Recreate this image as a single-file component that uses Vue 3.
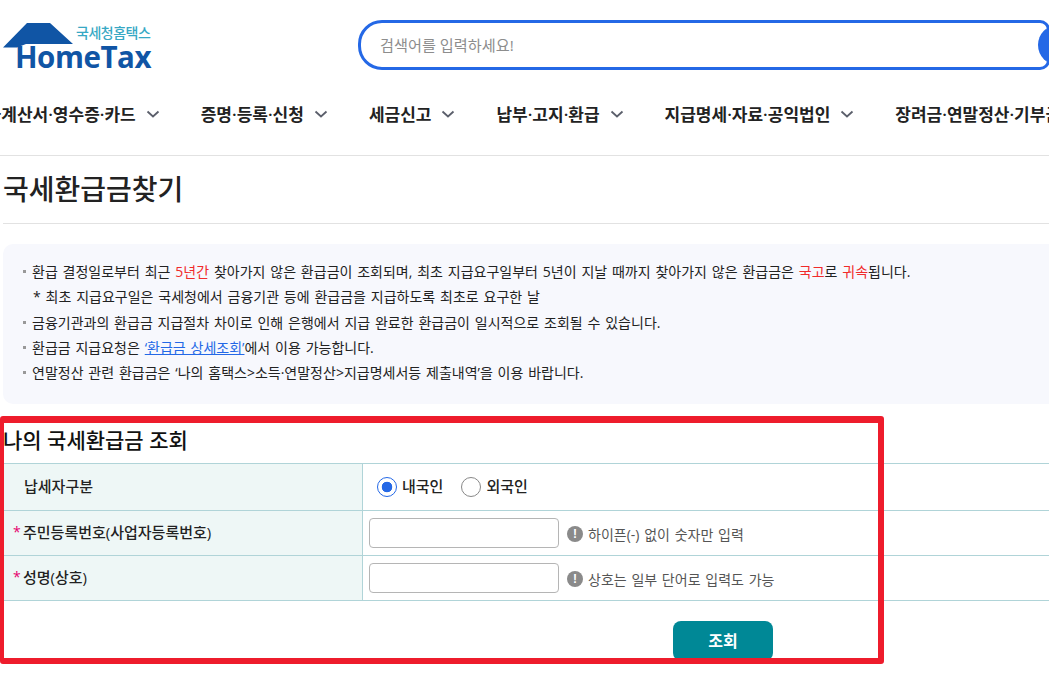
<script setup>
const nav = ['세금계산서·영수증·카드', '증명·등록·신청', '세금신고', '납부·고지·환급', '지급명세·자료·공익법인', '장려금·연말정산·기부금']
</script>

<template>
  <div class="page">
    <header class="top">
      <div class="logo">
        <svg class="house" width="80" height="30" viewBox="0 0 80 30">
          <path d="M3 25.5 L27 1 L50 1 L73 22 L26 22 L17 25.5 Z" fill="#1055a5" />
        </svg>
        <span class="logo-ko">국세청홈택스</span>
        <span class="logo-en">HomeTax</span>
      </div>
      <div class="search">
        <span class="placeholder">검색어를 입력하세요!</span>
        <span class="search-btn"></span>
      </div>
    </header>
    <nav class="nav">
      <div v-for="n in nav" :key="n" class="nav-item">
        <span>{{ n }}</span>
        <svg class="chev" width="14" height="9" viewBox="0 0 14 9"><path d="M1.5 1.5 L7 6.5 L12.5 1.5" fill="none" stroke="#5b5f6b" stroke-width="1.8" /></svg>
      </div>
    </nav>
    <h1 class="title">국세환급금찾기</h1>
    <section class="info">
      <p class="line"><i class="dot"></i>환급 결정일로부터 최근 <em>5년간</em> 찾아가지 않은 환급금이 조회되며, 최초 지급요구일부터 5년이 지날 때까지 찾아가지 않은 환급금은 <em>국고</em>로 <em>귀속</em>됩니다.</p>
      <p class="line sub">* 최초 지급요구일은 국세청에서 금융기관 등에 환급금을 지급하도록 최초로 요구한 날</p>
      <p class="line"><i class="dot"></i>금융기관과의 환급금 지급절차 차이로 인해 은행에서 지급 완료한 환급금이 일시적으로 조회될 수 있습니다.</p>
      <p class="line"><i class="dot"></i>환급금 지급요청은 <a class="link">‘환급금 상세조회’</a>에서 이용 가능합니다.</p>
      <p class="line"><i class="dot"></i>연말정산 관련 환급금은 ‘나의 홈택스&gt;소득·연말정산&gt;지급명세서등 제출내역’을 이용 바랍니다.</p>
    </section>
    <section class="lookup">
      <h2 class="sub-title">나의 국세환급금 조회</h2>
      <div class="row r1">
        <div class="th plain">납세자구분</div>
        <div class="td radios">
          <span class="radio on"></span><span class="rlabel">내국인</span>
          <span class="radio"></span><span class="rlabel">외국인</span>
        </div>
      </div>
      <div class="row r2">
        <div class="th"><b class="req">*</b>주민등록번호(사업자등록번호)</div>
        <div class="td">
          <input class="field" type="text" />
          <span class="warn">!</span><span class="hint">하이픈(-) 없이 숫자만 입력</span>
        </div>
      </div>
      <div class="row r2">
        <div class="th"><b class="req">*</b>성명(상호)</div>
        <div class="td">
          <input class="field" type="text" />
          <span class="warn">!</span><span class="hint">상호는 일부 단어로 입력도 가능</span>
        </div>
      </div>
      <div class="actions"><button class="btn">조회</button></div>
      <div class="redbox"></div>
    </section>
  </div>
</template>

<style>
html, body { margin: 0; background: #fff; overflow: hidden; }
</style>

<style scoped>
.page {
  width: 1049px; height: 680px; overflow: hidden; position: relative;
  font-family: "Open Sans", "Noto Sans CJK KR", sans-serif; color: #222; background: #fff;
}
.top { height: 84px; display: flex; align-items: flex-start; }
.logo { position: relative; width: 358px; height: 83px; flex: none; }
.house { position: absolute; left: 0; top: 22px; }
.logo-ko { position: absolute; left: 76px; top: 24px; font-size: 14px; line-height: 18px; color: #37a8c4; letter-spacing: -0.5px; font-weight: 500; }
.logo-en { position: absolute; left: 15px; top: 42px; font-family: "Open Sans", sans-serif; font-weight: 700; font-size: 29.5px; line-height: 30px; color: #1055a5; letter-spacing: -0.45px; }
.search {
  margin-top: 20px; box-sizing: border-box; width: 692px; height: 50px; flex: none;
  border: 3px solid #2468e6; border-radius: 24px 10px 10px 24px; display: flex; align-items: center; position: relative; overflow: hidden;
}
.placeholder { margin-left: 19px; margin-top: -2px; font-size: 15.2px; color: #8d8d8d; letter-spacing: 0; }
.search-btn { position: absolute; left: 677px; top: 2px; width: 40px; height: 40px; border-radius: 50%; background: #2468e6; }
.nav { height: 72px; display: flex; align-items: center; border-bottom: 1px solid #e2e2e2; white-space: nowrap; overflow: hidden; padding-bottom: 13px; box-sizing: border-box; }
.nav-item { display: flex; align-items: center; gap: 10px; font-size: 17px; font-weight: 600; color: #222; margin-right: 41px; flex: none; }
.nav-item:first-child { margin-left: -30px; }
.chev { margin-top: 3px; }
.title { margin: 0 0 0 3px; height: 68px; box-sizing: border-box; padding-top: 13px; font-size: 28px; line-height: 40px; font-weight: 500; letter-spacing: 0; border-bottom: 1px solid #e2e2e2; color: #222; }
.info { margin: 20px 0 0 3px; height: 160px; box-sizing: border-box; padding: 15px 0 0 19px; background: #f7f8fd; border-radius: 10px 0 0 10px; }
.line { margin: 0; height: 25.25px; line-height: 25px; font-size: 14px; word-spacing: 1.2px; color: #222; white-space: nowrap; position: relative; padding-left: 10px; }
.line.sub { padding-left: 11px; }
.dot { position: absolute; left: 1px; top: 11px; width: 3px; height: 3px; background: #999; }
em { font-style: normal; color: #f02b2b; }
.link { color: #2468e6; text-decoration: underline; }
.lookup { position: relative; margin-top: 13px; }
.sub-title { margin: 0; height: 47px; box-sizing: border-box; padding: 9px 0 0 3px; font-size: 21px; line-height: 28px; font-weight: 500; color: #111; border-bottom: 1px solid #b0d4d8; }
.row { display: flex; border-bottom: 1px solid #b0d4d8; box-sizing: border-box; }
.r1 { height: 47px; }
.r2 { height: 45px; }
.th { width: 363px; flex: none; box-sizing: border-box; background: #eef7f6; border-right: 1px solid #b0d4d8; display: flex; align-items: center; padding: 0 0 3px 13px; font-size: 15px; font-weight: 500; color: #222; }
.th.plain { padding-left: 24px; }
.req { color: #e6006e; font-weight: 500; width: 10px; font-size: 14px; }
.td { flex: 1; display: flex; align-items: center; padding-left: 6px; }
.radios { padding-left: 14px; }
.radio { box-sizing: border-box; width: 20px; height: 20px; border: 1px solid #888; border-radius: 50%; margin-right: 5px; background: #fff; flex: none; }
.radio.on { border-color: #2468e6; background: radial-gradient(circle, #2468e6 0 5px, #fff 5.6px); }
.rlabel { font-size: 15px; font-weight: 500; margin: -3px 18px 0 0; color: #222; }
.field { box-sizing: border-box; width: 190px; height: 30px; border: 1px solid #b5b5b5; border-radius: 4px; background: #fff; padding: 0; margin-right: 8px; }
.warn { width: 16px; height: 16px; border-radius: 50%; background: #8a8a8a; color: #fff; font: 700 12px/16px "Liberation Sans", sans-serif; text-align: center; margin-right: 5px; margin-top: 2px; flex: none; }
.hint { font-size: 14px; word-spacing: 1.1px; color: #555; margin-top: 1px; }
.actions { display: flex; padding: 20px 0 0 673px; }
.btn { width: 100px; height: 40px; border: 0; border-radius: 8px; background: #008896; color: #fff; font: 600 16px "Noto Sans CJK KR", sans-serif; padding: 0 0 3px; }
.redbox { position: absolute; left: 0; top: -1px; width: 884px; height: 248px; box-sizing: border-box; border-style: solid; border-color: #ee1c2c; border-width: 7px 6px 6px 4px; border-radius: 3px; pointer-events: none; }
</style>
